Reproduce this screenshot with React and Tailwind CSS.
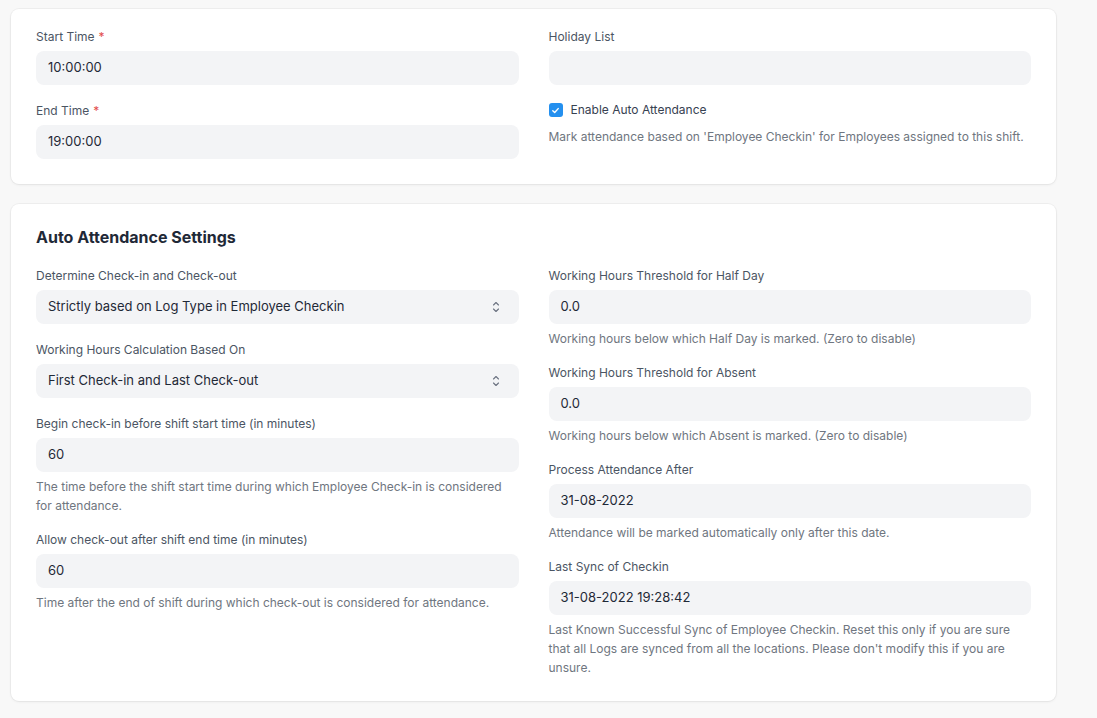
const Label = ({ children, required }) => (
  <div className="mb-[5px] text-[12px] leading-[18px] text-[#4b5563]">
    {children}
    {required && <span className="ml-1 text-[#e24c4c]">*</span>}
  </div>
);

const Desc = ({ children }) => (
  <p className="mt-[5px] text-[12px] leading-[19px] text-[#6f7680]">{children}</p>
);

const Field = ({ label, required, value, desc, select }) => (
  <div className={desc ? "mb-[16px]" : "mb-[17px]"}>
    <Label required={required}>{label}</Label>
    <div className="flex h-[34px] items-center justify-between rounded-lg bg-[#f3f4f6] px-3 text-[13px] text-[#1f2937]">
      <span>{value}</span>
      {select && (
        <svg width="10" height="16" viewBox="0 0 10 16" fill="none" className="mr-[6px]">
          <path d="M2.5 6 5 3.5 7.5 6" stroke="#6b7280" strokeWidth="1.1" strokeLinecap="round" strokeLinejoin="round" />
          <path d="M2.5 10 5 12.5 7.5 10" stroke="#6b7280" strokeWidth="1.1" strokeLinecap="round" strokeLinejoin="round" />
        </svg>
      )}
    </div>
    {desc && <Desc>{desc}</Desc>}
  </div>
);

const Card = ({ children, className = "" }) => (
  <div
    className={`rounded-lg bg-white px-[25px] shadow-[0_0_0_1px_rgba(0,0,0,0.035),0_1px_3px_rgba(0,0,0,0.06)] ${className}`}
  >
    {children}
  </div>
);

export default function App() {
  return (
    <div
      className="min-h-screen w-[1097px] bg-[#f8f8f8] pl-[11px] pr-[41px] pt-[9px] pb-[17px]"
      style={{ fontFamily: "Inter, 'Noto Sans', sans-serif" }}
    >
      {/* shift timings */}
      <Card className="pt-[19px] pb-[8px]">
        <div className="grid grid-cols-2 gap-x-[30px]">
          <div>
            <Field label="Start Time" required value="10:00:00" />
            <Field label="End Time" required value="19:00:00" />
          </div>
          <div>
            <Field label="Holiday List" value="" />
            <div className="-mt-[1px] flex items-center gap-2 text-[12px] leading-[18px] text-[#374151]">
              <span className="flex h-[14px] w-[14px] items-center justify-center rounded-[3px] bg-[#2490ef]">
                <svg width="9" height="9" viewBox="0 0 10 10" fill="none">
                  <path d="M2 5.2 4.1 7.2 8 2.9" stroke="white" strokeWidth="1.6" strokeLinecap="round" strokeLinejoin="round" />
                </svg>
              </span>
              Enable Auto Attendance
            </div>
            <p className="mt-[8px] text-[12px] leading-[19px] text-[#6f7680]">
              Mark attendance based on 'Employee Checkin' for Employees assigned to this shift.
            </p>
          </div>
        </div>
      </Card>

      {/* auto attendance */}
      <Card className="mt-[20px] pt-[21px] pb-[8px]">
        <h2 className="mb-[18px] text-[16px] leading-[24px] font-bold text-[#1f2937]">
          Auto Attendance Settings
        </h2>
        <div className="grid grid-cols-2 gap-x-[30px]">
          <div>
            <Field
              label="Determine Check-in and Check-out"
              value="Strictly based on Log Type in Employee Checkin"
              select
            />
            <Field
              label="Working Hours Calculation Based On"
              value="First Check-in and Last Check-out"
              select
            />
            <Field
              label="Begin check-in before shift start time (in minutes)"
              value="60"
              desc="The time before the shift start time during which Employee Check-in is considered for attendance."
            />
            <Field
              label="Allow check-out after shift end time (in minutes)"
              value="60"
              desc="Time after the end of shift during which check-out is considered for attendance."
            />
          </div>
          <div>
            <Field
              label="Working Hours Threshold for Half Day"
              value="0.0"
              desc="Working hours below which Half Day is marked. (Zero to disable)"
            />
            <Field
              label="Working Hours Threshold for Absent"
              value="0.0"
              desc="Working hours below which Absent is marked. (Zero to disable)"
            />
            <Field
              label="Process Attendance After"
              value="31-08-2022"
              desc="Attendance will be marked automatically only after this date."
            />
            <Field
              label="Last Sync of Checkin"
              value="31-08-2022 19:28:42"
              desc="Last Known Successful Sync of Employee Checkin. Reset this only if you are sure that all Logs are synced from all the locations. Please don't modify this if you are unsure."
            />
          </div>
        </div>
      </Card>
    </div>
  );
}
